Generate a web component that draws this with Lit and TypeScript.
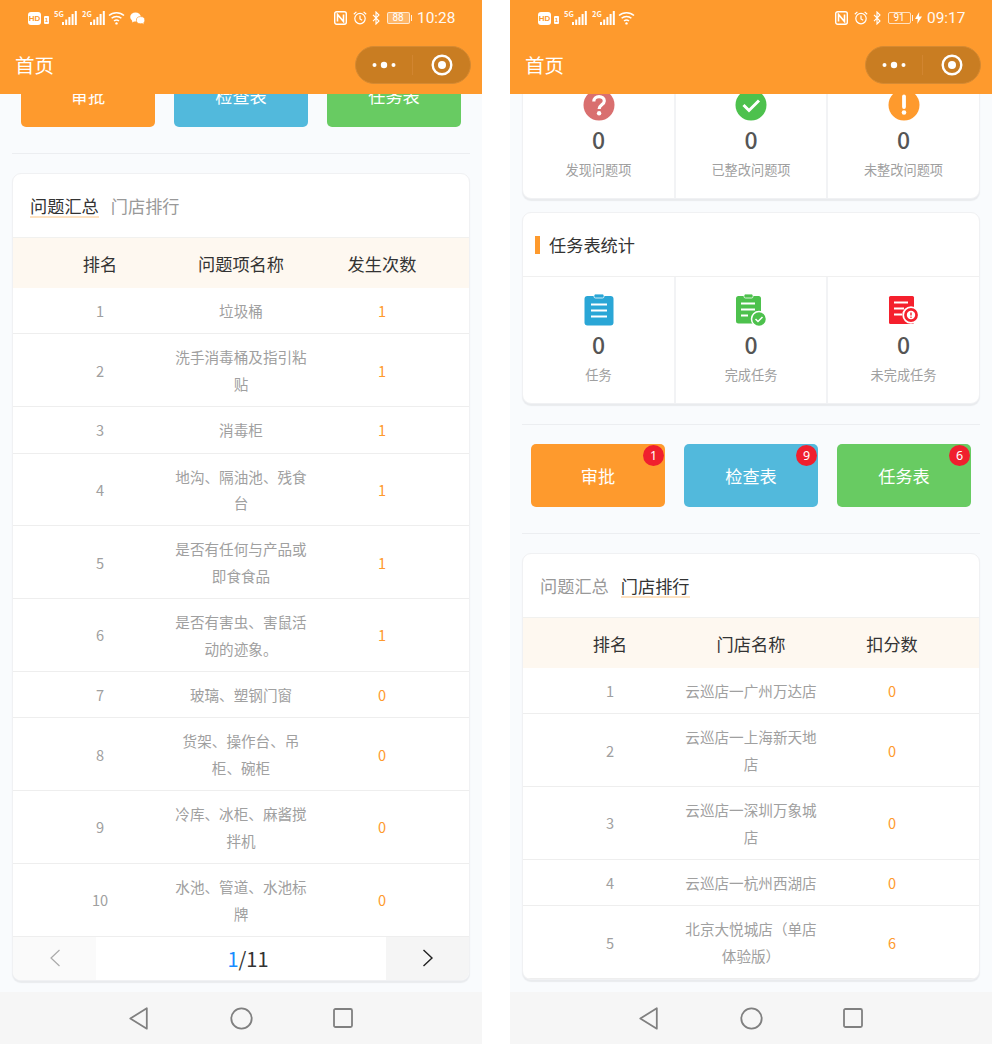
import { LitElement, html, css, svg } from "lit";
import { customElement } from "lit/decorators.js";

type Row = [string, string, string];

const problemRows: Row[] = [
  ["1", "垃圾桶", "1"],
  ["2", "洗手消毒桶及指引粘贴", "1"],
  ["3", "消毒柜", "1"],
  ["4", "地沟、隔油池、残食台", "1"],
  ["5", "是否有任何与产品或即食食品", "1"],
  ["6", "是否有害虫、害鼠活动的迹象。", "1"],
  ["7", "玻璃、塑钢门窗", "0"],
  ["8", "货架、操作台、吊柜、碗柜", "0"],
  ["9", "冷库、冰柜、麻酱搅拌机", "0"],
  ["10", "水池、管道、水池标牌", "0"],
];

const storeRows: Row[] = [
  ["1", "云巡店一广州万达店", "0"],
  ["2", "云巡店一上海新天地店", "0"],
  ["3", "云巡店一深圳万象城店", "0"],
  ["4", "云巡店一杭州西湖店", "0"],
  ["5", "北京大悦城店（单店体验版）", "6"],
];

const bars = svg`
  <rect x="0" y="11" width="2" height="3" /><rect x="3.2" y="8.5" width="2" height="5.5" />
  <rect x="6.4" y="6" width="2" height="8" /><rect x="9.6" y="3" width="2" height="11" />
  <rect x="12.8" y="0" width="2" height="14" />`;

@customElement("app-root")
export class AppRoot extends LitElement {
  static styles = css`
    :host {
      display: flex;
      justify-content: space-between;
      width: 992px;
      height: 1044px;
      background: #fff;
      font-family: "Noto Sans CJK SC", "Noto Sans", sans-serif;
      overflow: hidden;
    }
    .phone {
      width: 482px;
      height: 1044px;
      display: flex;
      flex-direction: column;
      background: #f9fbfd;
    }
    .top {
      flex: none;
      height: 94px;
      background: #fe9a2d;
      color: #fff;
      position: relative;
      z-index: 2;
    }
    .status {
      height: 36px;
      display: flex;
      justify-content: space-between;
      align-items: center;
      padding: 0 28px;
      box-sizing: border-box;
    }
    .st-left, .st-right { display: flex; align-items: center; }
    .st-left svg, .st-right svg { display: block; flex: none; }
    .g5 { font-size: 7.5px; font-weight: 700; width: 8px; margin: -9px 0 0 5px; opacity: .95; line-height: 8px; white-space: nowrap; }
    .hd {
      width: 13px; height: 13px; border-radius: 3px; background: #fff; color: #fe9a2d;
      font: 700 8px/13px "Liberation Sans", sans-serif; text-align: center;
    }
    .sim { width: 5px; height: 8px; background: #fff; color: #fe9a2d; margin: 3px 0 0 3px; border-radius: 1px;
      font: 700 6px/8px "Liberation Sans", sans-serif; text-align: center; }
    .battery {
      width: 23px; height: 12px; box-sizing: border-box; border: 1px solid rgba(255,255,255,.7);
      border-radius: 2px; font: 400 10px/10px Roboto, sans-serif; text-align: center; color: #fff;
      margin-left: 7px;
    }
    .battery.fill { background: rgba(255,255,255,.28); }
    .nub { width: 1.5px; height: 6px; background: #fff; margin-left: 1px; opacity: .85; }
    .time { font: 400 15.4px/20px Roboto, sans-serif; margin-left: 5px; width: 37px; opacity: .95; white-space: nowrap; }
    .nav {
      height: 58px;
      display: flex;
      align-items: center;
      justify-content: space-between;
      padding: 0 11px 0 15px;
    }
    .nav-title { font-size: 19.5px; line-height: 28px; }
    .capsule {
      width: 116px; height: 38px; box-sizing: border-box; border-radius: 19px;
      background: #c97d22; border: 1px solid #d68a32;
      display: flex; align-items: center;
    }
    .cap-part { flex: 1; display: flex; align-items: center; justify-content: center; height: 100%; }
    .cap-part + .cap-part { border-left: 1px solid #d18530; height: 20px; padding-left: 2px; }
    .body { flex: 1; min-height: 0; overflow: hidden; }
    .inner { display: flex; flex-direction: column; }
    .inner.from-buttons { margin-top: -30px; }
    .inner.from-stats { margin-top: -23px; }
    .card {
      margin: 0 12px;
      box-sizing: border-box;
      background: #fff;
      border: 1px solid #f0f1f3;
      border-radius: 9px;
      box-shadow: 0 1.5px 1px #e9ebee;
      overflow: hidden;
      flex: none;
    }
    .card.second { margin-top: 13px; }
    .card-title {
      height: 64px; box-sizing: border-box; border-bottom: 1px solid #f0f0f0;
      display: flex; align-items: center; padding-left: 12px; gap: 9px;
      font-size: 17.2px; color: #333;
    }
    .mark { width: 5px; height: 18px; background: #fe9a2d; }
    .cells { display: grid; grid-template-columns: 151px 152px 1fr; }
    .cell {
      height: 126px; box-sizing: border-box; padding-top: 16px;
      display: flex; flex-direction: column; align-items: center;
    }
    .cell + .cell { border-left: 2px solid #f2f3f5; }
    .cell svg { display: block; flex: none; }
    .zero { font-size: 23px; line-height: 34px; height: 34px; color: #555; font-weight: 500; }
    .label { font-size: 13.2px; line-height: 24px; margin-top: 2px; color: #a0a0a0; }
    .divider { height: 1px; background: #eceef1; margin: 0 12px; flex: none; }
    .divider.after-card { margin-top: 20px; }
    .divider.after-buttons { margin-top: 26px; }
    .buttons { display: flex; gap: 19px; padding: 0 21px; margin-top: 19px; flex: none; }
    .inner.from-buttons .buttons { margin-top: 0; }
    .btn {
      position: relative; width: 134px; height: 63px; border-radius: 5px; color: #fff;
      font-size: 17.2px; display: flex; align-items: center; justify-content: center;
    }
    .btn.orange { background: #fe9a2d; }
    .btn.blue { background: #52b9dc; }
    .btn.green { background: #68cb62; }
    .badge {
      position: absolute; top: 1px; right: 1px; width: 21px; height: 21px; border-radius: 50%;
      background: #f01f2e; font: 400 12.5px/21px "Noto Sans", sans-serif; text-align: center; color: #fff;
    }
    .table-card { margin-top: 19px; }
    .tabs {
      height: 64px; box-sizing: border-box; display: flex; align-items: center; gap: 12px;
      padding-left: 17px; border-bottom: 1px solid #f1f1ef; font-size: 17.2px; color: #999;
    }
    .tab { line-height: 20px; border-bottom: 2px solid transparent; margin-top: 2px; }
    .tab.on { color: #333; border-bottom-color: #fde2c2; }
    .thead, .tr {
      display: grid; grid-template-columns: repeat(3, 141px); padding: 0 16.5px; text-align: center; align-items: center;
    }
    .thead { height: 50px; background: #fef8f0; color: #333; font-size: 17.2px; }
    .tr {
      box-sizing: content-box; padding-top: 10px; padding-bottom: 9px; border-bottom: 1px solid #eeeeee;
      font-size: 14.6px; line-height: 26.4px; color: #a0a0a0;
    }
    .num { color: #fe9a2d; }
    .pager { height: 43px; display: flex; align-items: stretch; }
    .pg { width: 83px; display: flex; align-items: center; justify-content: center; flex: none; }
    .pg.prev { background: #fafafa; }
    .pg.next { background: #f5f5f5; margin-right: 0; }
    .pg-mid { flex: 1; display: flex; align-items: center; justify-content: center; padding-left: 14px; font-size: 20px; color: #333; }
    .cur { color: #1a8cff; }
    .sysbar {
      flex: none; height: 52px; background: #f6f6f6; position: relative;
      display: grid; grid-template-columns: 102px 102px 102px; justify-content: center; align-items: center; justify-items: center;
    }
    .sysbar svg { display: block; }
    .sysbar .back { margin-right: 2px; }
  `;

  private leftStatus() {
    return html`
      <div class="hd">HD</div>
      <div class="sim">1</div>
      <div class="g5">5G</div>
      <svg width="15" height="14" fill="#fff">${bars}</svg>
      <div class="g5">2G</div>
      <svg width="15" height="14" fill="#fff">${bars}</svg>`;
  }

  private wifi() {
    return html`<svg width="17" height="14" viewBox="0 0 17 14" fill="none" stroke="#fff" stroke-width="1.5" style="margin-left:3px">
      <path d="M1 4.5C5 .7 12 .7 16 4.5" /><path d="M3.6 7.3C6.3 4.8 10.7 4.8 13.4 7.3" /><path d="M6 10c1.4-1.2 3.6-1.2 5 0" />
      <circle cx="8.5" cy="12.4" r="1.2" fill="#fff" stroke="none" />
    </svg>`;
  }

  private wechat() {
    return html`<svg width="15" height="13" viewBox="0 0 15 13" fill="#fff" style="margin-left:5px">
      <ellipse cx="5.5" cy="5" rx="5.3" ry="4.6" /><path d="M2.5 8l-.5 2.4L5 9z" />
      <ellipse cx="10.6" cy="8.2" rx="4.2" ry="3.6" stroke="#fe9a2d" stroke-width=".7" /><path d="M12.5 11l1 1.6-.2-2.6z" />
    </svg>`;
  }

  private rightIcons() {
    return html`
      <svg width="13" height="14" viewBox="0 0 13 14" fill="none" stroke="#fff">
        <rect x=".7" y=".7" width="11.6" height="12.6" rx="2" stroke-width="1.4" />
        <path d="M3.5 10.5V3.5L9.5 10.5V3.5" stroke-width="1.6" />
      </svg>
      <svg width="14" height="14" viewBox="0 0 14 14" fill="none" stroke="#fff" stroke-width="1.2" style="margin-left:6px">
        <circle cx="7" cy="7.6" r="5.2" /><path d="M7 4.6V8l2.2 1.3" /><path d="M.8 3.2L3.4.9M13.2 3.2L10.6.9" />
      </svg>
      <svg width="8" height="14" viewBox="0 0 8 14" fill="none" stroke="#fff" stroke-width="1.1" style="margin-left:5px">
        <path d="M1 3.8L7 10 4 13V1l3 3L1 10.200" />
      </svg>`;
  }

  private statusBar(time: string, level: string, charging: boolean, wechat: boolean) {
    return html`<div class="status">
      <div class="st-left">${this.leftStatus()}${this.wifi()}${wechat ? this.wechat() : ""}</div>
      <div class="st-right">
        ${this.rightIcons()}
        <div class="battery ${charging ? "" : "fill"}">${level}</div>
        <div class="nub"></div>
        ${charging
          ? html`<svg width="7" height="12" viewBox="0 0 7 12" fill="#fff" style="margin-left:2px"><path d="M4.200 0L0 7h2.800L2.200 12 7 4.600H4z" /></svg>`
          : ""}
        <div class="time">${time}</div>
      </div>
    </div>`;
  }

  private navBar() {
    return html`<div class="nav">
      <div class="nav-title">首页</div>
      <div class="capsule">
        <div class="cap-part">
          <svg width="24" height="8" viewBox="0 0 24 8" fill="#fff"><circle cx="2.500" cy="4" r="2" /><circle cx="12" cy="4" r="3.200" /><circle cx="21.500" cy="4" r="2" /></svg>
        </div>
        <div class="cap-part">
          <svg width="22" height="22" viewBox="0 0 22 22"><circle cx="11" cy="11" r="9.300" fill="none" stroke="#fff" stroke-width="2.400" /><circle cx="11" cy="11" r="4" fill="#fff" /></svg>
        </div>
      </div>
    </div>`;
  }

  private statIcon(kind: "q" | "ok" | "warn") {
    const color = kind === "q" ? "#d96f6f" : kind === "ok" ? "#4dc14d" : "#fe9a2d";
    return html`<svg width="32" height="34" viewBox="0 0 32 34">
      <circle cx="16" cy="17" r="15.500" fill="${color}" />
      ${kind === "q"
        ? svg`<path d="M10.800 13.500c0-3 2.300-4.900 5.300-4.900s5.200 1.800 5.200 4.300c0 3.800-5.200 3.800-5.200 8" fill="none" stroke="#fff" stroke-width="3.200" /><circle cx="16.100" cy="25.300" r="2.200" fill="#fff" />`
        : kind === "ok"
          ? svg`<path d="M8.500 17l5.500 5.500L24 12.500" fill="none" stroke="#fff" stroke-width="3" />`
          : svg`<path d="M16 8.500v10.500" stroke="#fff" stroke-width="3.800" stroke-linecap="round" /><circle cx="16" cy="24.500" r="2.300" fill="#fff" />`}
    </svg>`;
  }

  private taskIcon(kind: "all" | "done" | "open") {
    if (kind === "all") {
      return html`<svg width="32" height="34" viewBox="0 0 32 34">
        <rect x="1.500" y="3" width="29" height="29.500" rx="3" fill="#2aa6d6" />
        <rect x="11" y="1" width="10" height="4" rx="1.500" fill="#2aa6d6" stroke="#fff" stroke-width=".8" />
        <path d="M8 11.500h16M8 17.500h16M8 23.500h16" stroke="#fff" stroke-width="2.200" />
      </svg>`;
    }
    if (kind === "done") {
      return html`<svg width="32" height="34" viewBox="0 0 32 34">
        <rect x="1" y="3" width="25" height="27.500" rx="2.500" fill="#4dc14d" />
        <rect x="9" y="1" width="9" height="4" rx="1.500" fill="#4dc14d" stroke="#fff" stroke-width=".8" />
        <path d="M6 10.500h14M6 16.500h14M6 22.500h7" stroke="#fff" stroke-width="2" />
        <circle cx="24" cy="26" r="7.500" fill="#4dc14d" stroke="#fff" stroke-width="1.500" />
        <path d="M20.500 26l2.500 2.500 4.500-4.500" fill="none" stroke="#fff" stroke-width="1.500" />
      </svg>`;
    }
    return html`<svg width="32" height="34" viewBox="0 0 32 34">
      <rect x="1" y="3" width="25" height="28" rx="1.500" fill="#f5202d" />
      <path d="M6 9.500h14M6 15.500h10M6 21.500h8" stroke="#fff" stroke-width="2" />
      <circle cx="23" cy="22" r="7.800" fill="#f5202d" stroke="#fff" stroke-width="1.800" />
      <circle cx="23" cy="22" r="4.200" fill="#fff" />
      <path d="M23 19.500v3" stroke="#f5202d" stroke-width="1.400" /><circle cx="23" cy="24.300" r=".8" fill="#f5202d" />
    </svg>`;
  }

  private cell(icon: unknown, label: string) {
    return html`<div class="cell">
      ${icon}
      <div class="zero">0</div>
      <div class="label">${label}</div>
    </div>`;
  }

  private buttons() {
    return html`<div class="buttons">
      <div class="btn orange">审批<span class="badge">1</span></div>
      <div class="btn blue">检查表<span class="badge">9</span></div>
      <div class="btn green">任务表<span class="badge">6</span></div>
    </div>`;
  }

  private table(active: number, heads: string[], rows: Row[], pager: boolean) {
    return html`<div class="card table-card">
      <div class="tabs">
        <div class="tab ${active === 0 ? "on" : ""}">问题汇总</div>
        <div class="tab ${active === 1 ? "on" : ""}">门店排行</div>
      </div>
      <div class="thead">${heads.map((h) => html`<div>${h}</div>`)}</div>
      ${rows.map(
        (r) => html`<div class="tr"><div>${r[0]}</div><div>${r[1]}</div><div class="num">${r[2]}</div></div>`
      )}
      ${pager
        ? html`<div class="pager">
            <div class="pg prev">
              <svg width="12" height="18" viewBox="0 0 12 18" fill="none" stroke="#aaa" stroke-width="1.200"><path d="M10.500 1L2 9l8.500 8" /></svg>
            </div>
            <div class="pg-mid"><span class="cur">1</span>/11</div>
            <div class="pg next">
              <svg width="12" height="18" viewBox="0 0 12 18" fill="none" stroke="#222" stroke-width="1.400"><path d="M1.500 1L10 9l-8.500 8" /></svg>
            </div>
          </div>`
        : ""}
    </div>`;
  }

  private sysBar() {
    return html`<div class="sysbar">
      <svg class="back" width="19" height="23" viewBox="0 0 19 23" fill="none" stroke="#808080" stroke-width="1.800" stroke-linejoin="round"><path d="M17.800 1.300v20.400L1.300 11.500z" /></svg>
      <svg width="23" height="23" viewBox="0 0 23 23" fill="none" stroke="#808080" stroke-width="1.800"><circle cx="11.500" cy="11.500" r="10.200" /></svg>
      <svg width="20" height="20" viewBox="0 0 20 20" fill="none" stroke="#808080" stroke-width="1.800"><rect x="1" y="1" width="18" height="18" rx="1.500" /></svg>
    </div>`;
  }

  render() {
    return html`
      <div class="phone">
        <div class="top">${this.statusBar("10:28", "88", false, true)}${this.navBar()}</div>
        <div class="body">
          <div class="inner from-buttons">
            ${this.buttons()}
            <div class="divider after-buttons"></div>
            ${this.table(0, ["排名", "问题项名称", "发生次数"], problemRows, true)}
          </div>
        </div>
        ${this.sysBar()}
      </div>
      <div class="phone">
        <div class="top">${this.statusBar("09:17", "91", true, false)}${this.navBar()}</div>
        <div class="body">
          <div class="inner from-stats">
            <div class="card">
              <div class="cells">
                ${this.cell(this.statIcon("q"), "发现问题项")}
                ${this.cell(this.statIcon("ok"), "已整改问题项")}
                ${this.cell(this.statIcon("warn"), "未整改问题项")}
              </div>
            </div>
            <div class="card second">
              <div class="card-title"><span class="mark"></span>任务表统计</div>
              <div class="cells">
                ${this.cell(this.taskIcon("all"), "任务")}
                ${this.cell(this.taskIcon("done"), "完成任务")}
                ${this.cell(this.taskIcon("open"), "未完成任务")}
              </div>
            </div>
            <div class="divider after-card"></div>
            ${this.buttons()}
            <div class="divider after-buttons"></div>
            ${this.table(1, ["排名", "门店名称", "扣分数"], storeRows, false)}
          </div>
        </div>
        ${this.sysBar()}
      </div>
    `;
  }
}
